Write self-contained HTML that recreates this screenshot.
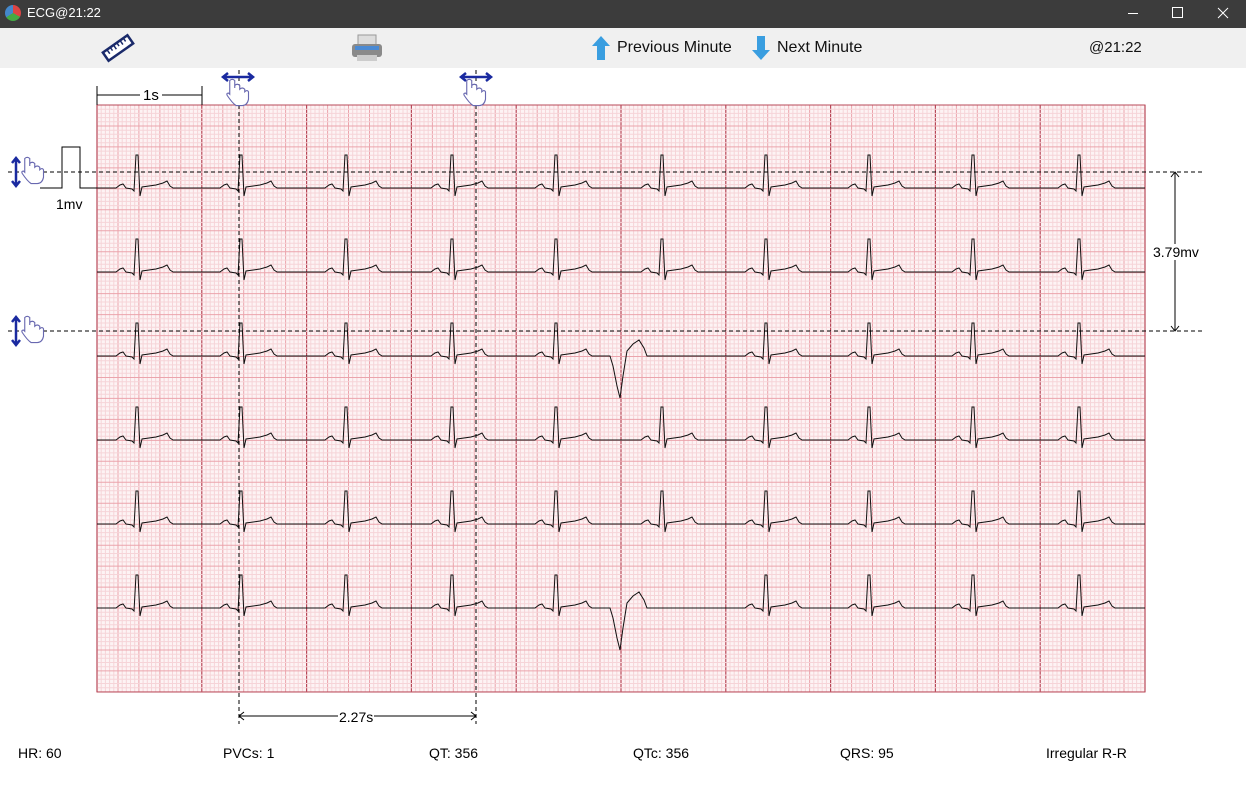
<!DOCTYPE html>
<html><head><meta charset="utf-8"><style>
body{margin:0;width:1246px;height:800px;overflow:hidden;background:#fff;font-family:"Liberation Sans",sans-serif;position:relative}
.t{position:absolute;white-space:nowrap}
</style></head><body>
<div style="position:absolute;left:0;top:0;width:1246px;height:28px;background:#3c3c3c"></div>
<div style="position:absolute;left:5px;top:5px;width:16px;height:16px;border-radius:50%;background:conic-gradient(#d44 0 33%,#4a4 0 66%,#48c 0)"></div>
<div class="t" style="left:27px;top:5px;color:#fff;font-size:13px">ECG@21:22</div>
<svg style="position:absolute;left:1120px;top:0" width="126" height="28"><g stroke="#fff" stroke-width="1" fill="none"><line x1="8" y1="13.5" x2="18" y2="13.5"/><rect x="52.5" y="7.5" width="10" height="10"/><line x1="98" y1="8" x2="108" y2="18"/><line x1="108" y1="8" x2="98" y2="18"/></g></svg>
<div style="position:absolute;left:0;top:28px;width:1246px;height:40px;background:#f0f0f0"></div>
<svg style="position:absolute;left:100px;top:32px" width="36" height="32"><g transform="rotate(-35 18 16)"><rect x="3" y="11" width="30" height="10" fill="#fff" stroke="#1a2a6a" stroke-width="2.5"/><g stroke="#1a2a6a" stroke-width="1.5"><line x1="8" y1="11" x2="8" y2="16"/><line x1="12" y1="11" x2="12" y2="15"/><line x1="16" y1="11" x2="16" y2="16"/><line x1="20" y1="11" x2="20" y2="15"/><line x1="24" y1="11" x2="24" y2="16"/><line x1="28" y1="11" x2="28" y2="15"/></g></g></svg>
<svg style="position:absolute;left:350px;top:33px" width="34" height="30"><rect x="8" y="2" width="18" height="10" fill="#ddd" stroke="#999"/><rect x="2" y="11" width="30" height="13" rx="3" fill="#8a8a8a"/><rect x="5" y="13" width="24" height="4" fill="#4a8ad4"/><rect x="7" y="22" width="20" height="6" fill="#ccc"/></svg>
<svg style="position:absolute;left:591px;top:35px" width="20" height="26"><path d="M10 1 L19 11 L14 11 L14 25 L6 25 L6 11 L1 11Z" fill="#3a9ee0"/></svg>
<div class="t" style="left:617px;top:39px;font-size:16px;color:#111">Previous Minute</div>
<svg style="position:absolute;left:751px;top:35px" width="20" height="26"><path d="M6 1 L14 1 L14 15 L19 15 L10 25 L1 15 L6 15Z" fill="#3a9ee0"/></svg>
<div class="t" style="left:777px;top:39px;font-size:16px;color:#111">Next Minute</div>
<div class="t" style="left:1089px;top:39px;font-size:15px;color:#111">@21:22</div>
<svg id="s" style="position:absolute;left:0;top:0" width="1246" height="800"></svg>
<div class="t" style="left:140px;top:87px;font-size:15px;background:#fff;padding:0 3px">1s</div>
<div class="t" style="left:56px;top:196px;font-size:14px">1mv</div>
<div class="t" style="left:1153px;top:244px;font-size:14px;background:#fff">3.79mv</div>
<div class="t" style="left:338px;top:709px;font-size:14px;background:#fff;padding:0 1px">2.27s</div>
<div class="t" style="left:18px;top:745px;font-size:14px">HR: 60</div>
<div class="t" style="left:223px;top:745px;font-size:14px">PVCs: 1</div>
<div class="t" style="left:429px;top:745px;font-size:14px">QT: 356</div>
<div class="t" style="left:633px;top:745px;font-size:14px">QTc: 356</div>
<div class="t" style="left:840px;top:745px;font-size:14px">QRS: 95</div>
<div class="t" style="left:1046px;top:745px;font-size:14px">Irregular R-R</div>
<script>
var s='';var X0=97,Y0=105,W=1048,H=587,sec=104.8;
s+='<rect x="'+X0+'" y="'+Y0+'" width="'+W+'" height="'+H+'" fill="#fdf3f4"/>';
var sm=sec/25;
for(var i=0;i*sm<=W+0.5;i++){var x=X0+i*sm;var c=i%25==0?'#b84858':(i%5==0?'#eba4ac':'#f6d4d8');var w=i%25==0?1.2:1;s+='<line x1="'+x.toFixed(1)+'" y1="'+Y0+'" x2="'+x.toFixed(1)+'" y2="'+(Y0+H)+'" stroke="'+c+'" stroke-width="'+w+'"/>';}
for(var j=0;j*sm<=H+0.5;j++){var y=Y0+j*sm;var c=j%5==0?'#eba4ac':'#f6d4d8';s+='<line x1="'+X0+'" y1="'+y.toFixed(1)+'" x2="'+(X0+W)+'" y2="'+y.toFixed(1)+'" stroke="'+c+'"/>';}
s+='<rect x="'+X0+'" y="'+Y0+'" width="'+W+'" height="'+H+'" fill="none" stroke="#b84858"/>';
var R=[136,240,345,451,555,661,765,868,972,1078];
for(var row=0;row<6;row++){var b=188+row*84;var d='M97 '+b;var pvc=(row==2||row==5);
for(var k=0;k<R.length;k++){var r=R[k];
if(pvc&&k==5){d+=' L610 '+b+' L613 '+(b+10)+' L617 '+(b+30)+' L620 '+(b+42)+' L623 '+(b+20)+' L627 '+(b-5)+' L633 '+(b-12)+' L639 '+(b-16)+' L644 '+(b-8)+' L647 '+b;continue;}
d+=' L'+(r-20)+' '+b+' L'+(r-16)+' '+(b-3)+' L'+(r-13)+' '+(b-4)+' L'+(r-10)+' '+b+' L'+(r-4)+' '+(b+1)+' L'+(r-2)+' '+(b+3)+' L'+r+' '+(b-33)+' L'+(r+2)+' '+(b-33)+' L'+(r+4)+' '+(b+8)+' L'+(r+6)+' '+(b-1)+' L'+(r+20)+' '+(b-3)+' L'+(r+27)+' '+(b-5)+' L'+(r+31)+' '+(b-7)+' L'+(r+34)+' '+(b-2)+' L'+(r+37)+' '+b;}
d+=' L1145 '+b;s+='<path d="'+d+'" fill="none" stroke="#111" stroke-width="1"/>';}
s+='<path d="M40 188 L62 188 L62 147 L80 147 L80 188 L97 188" fill="none" stroke="#000"/>';
s+='<g stroke="#000" stroke-dasharray="4,3"><line x1="8" y1="172" x2="1205" y2="172"/><line x1="8" y1="331" x2="1205" y2="331"/><line x1="239" y1="70" x2="239" y2="724"/><line x1="476" y1="70" x2="476" y2="724"/></g>';
s+='<g stroke="#000"><line x1="97" y1="86" x2="97" y2="105"/><line x1="202" y1="86" x2="202" y2="105"/><line x1="97" y1="95" x2="202" y2="95"/><line x1="1175" y1="172" x2="1175" y2="331"/><line x1="239" y1="716" x2="476" y2="716"/></g>';
s+='<path d="M1171 177 L1175 172 L1179 177 M1171 326 L1175 331 L1179 326 M244 712 L239 716 L244 720 M471 712 L476 716 L471 720" fill="none" stroke="#000"/>';
function hand(x,y){return '<path transform="translate('+x+' '+y+') scale(1.25)" d="M3 10 L3 2 Q5 0 7 2 L7 8 L7 6 Q9 4 11 6 L11 9 Q13 7 15 9 L15 11 Q17 9 18 11 L18 17 Q17 22 13 22 L8 22 Q5 20 1 14 Q0 12 2 12 L3 13Z" fill="#fff" stroke="#6868b0" stroke-width="0.9"/>';}
function hArr(cx,y){return '<path d="M'+(cx-15)+' '+y+' L'+(cx+15)+' '+y+' M'+(cx-10)+' '+(y-4)+' L'+(cx-15)+' '+y+' L'+(cx-10)+' '+(y+4)+' M'+(cx+10)+' '+(y-4)+' L'+(cx+15)+' '+y+' L'+(cx+10)+' '+(y+4)+'" fill="none" stroke="#1a2aa0" stroke-width="2.5"/>';}
function vArr(x,cy){return '<path d="M'+x+' '+(cy-14)+' L'+x+' '+(cy+14)+' M'+(x-4)+' '+(cy-9)+' L'+x+' '+(cy-14)+' L'+(x+4)+' '+(cy-9)+' M'+(x-4)+' '+(cy+9)+' L'+x+' '+(cy+14)+' L'+(x+4)+' '+(cy+9)+'" fill="none" stroke="#1a2aa0" stroke-width="2.5"/>';}
s+=hArr(238,77)+hand(226,78)+hArr(476,77)+hand(463,78)+vArr(16,172)+hand(21,156)+vArr(16,331)+hand(21,315);
document.getElementById('s').innerHTML=s;
</script>
</body></html>
